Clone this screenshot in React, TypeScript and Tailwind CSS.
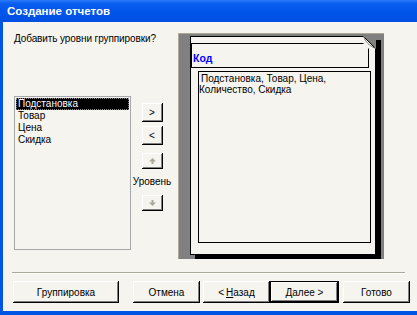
import React from "react";

const btn3d =
  "bg-[#F5F4EF] shadow-[inset_-1px_-1px_#000,inset_1px_1px_#fff,inset_-2px_-2px_#808080] flex items-center justify-center text-[10px] text-black";

function SmallBtn({ children, className = "" }: { children?: React.ReactNode; className?: string }) {
  return <div className={`${btn3d} w-[21px] ${className}`}>{children}</div>;
}

export default function App() {
  return (
    <div className="w-[417px] h-[315px] overflow-hidden bg-[#0054E3] flex flex-col font-['Liberation_Sans',Arial,sans-serif]">
      {/* Title bar */}
      <div className="h-[22px] shrink-0 bg-[linear-gradient(180deg,#2B7BF7_0%,#0A5FEE_15%,#0055EA_50%,#0050E2_100%)] pl-[7px] flex items-center">
        <span className="text-white font-bold text-[11.5px] leading-[22px]">Создание отчетов</span>
      </div>
      {/* Body with frame */}
      <div className="flex-1 flex pl-[3px] pb-[4px] bg-[#0055E5]">
        <div className="flex-1 bg-[#F5F4EF] flex flex-col">
          <div className="flex mt-[11px] ml-[11px]">
            {/* Left column */}
            <div className="w-[164px] flex flex-col">
              <div className="text-[10px] leading-[12px] text-black tracking-[-0.1px]">Добавить уровни группировки?</div>
              <div className="flex mt-[51px]">
                <div className="w-[117px] h-[154px] border border-[#A7A6AA] bg-[#F5F4EF] pt-[1px] px-[1px] text-[10px]">
                  <div className="h-[12px] leading-[12px] bg-black text-white pl-[2px] outline outline-1 outline-dotted outline-[#888] -outline-offset-1">
                    Подстановка
                  </div>
                  <div className="h-[12px] leading-[12px] pl-[2px] text-black">Товар</div>
                  <div className="h-[12px] leading-[12px] pl-[2px] text-black">Цена</div>
                  <div className="h-[12px] leading-[12px] pl-[2px] text-black">Скидка</div>
                </div>
                <div className="w-[42px] flex flex-col items-center">
                  <SmallBtn className="mt-[7px] h-[19px]">&gt;</SmallBtn>
                  <SmallBtn className="mt-[4px] h-[19px]">&lt;</SmallBtn>
                  <SmallBtn className="mt-[8px] h-[16px]">
                    <svg width="7" height="6" viewBox="0 0 7 6">
                      <polygon points="3.5,0 7,3.5 4.5,3.5 4.5,6 2.5,6 2.5,3.5 0,3.5" fill="#ACA899" />
                    </svg>
                  </SmallBtn>
                  <div className="mt-[7px] text-[10px] leading-[12px] text-black">Уровень</div>
                  <SmallBtn className="mt-[7px] h-[16px]">
                    <svg width="7" height="6" viewBox="0 0 7 6">
                      <polygon points="2.5,0 4.5,0 4.5,2.5 7,2.5 3.5,6 0,2.5 2.5,2.5" fill="#ACA899" />
                    </svg>
                  </SmallBtn>
                </div>
              </div>
            </div>
            {/* Preview */}
            <div className="w-[206px] h-[226px] bg-[#808080] border-t border-l border-[#ACA899] pt-[2px] pl-[11px]">
              <div className="relative w-[186px] h-[219px] border border-black bg-[#F5F4EF] shadow-[5px_4px_0_#000]">
                <div className="mt-[6px] w-[178px] h-[25px] border border-black pl-[1px] pt-[1px]">
                  <span className="text-[10.5px] leading-[12px] font-bold text-[#0000FF]">Код</span>
                </div>
                <div className="mt-[3px] ml-[7px] w-[173px] h-[172px] border border-black pl-[0px] pt-[1px] text-[10px] leading-[11px] text-black whitespace-nowrap">
                  <div className="pl-[2px]">Подстановка, Товар, Цена,</div>
                  <div>Количество, Скидка</div>
                </div>
                <svg className="absolute -top-px -right-px" width="13" height="13" viewBox="0 0 13 13">
                  <polygon points="0,0 13,0 13,13" fill="#808080" />
                  <polygon points="0.5,0.5 12.5,12.5 0.5,12.5" fill="#F5F4EF" />
                  <path d="M0.5 0.5 L12.5 12.5" stroke="#000" strokeWidth="1" fill="none" />
                  <path d="M0.5 0.5 C3 6 5 9 12.5 12.5" stroke="#808080" strokeWidth="1" fill="none" />
                </svg>
              </div>
            </div>
          </div>
          {/* Separator */}
          <div className="mt-[13px] ml-[9px] w-[393px] h-[2px] border-t border-[#ACA899] border-b border-b-white" />
          {/* Buttons */}
          <div className="flex mt-[7px] ml-[10px]">
            <div className={`${btn3d} w-[106px] h-[22px]`}>Группировка</div>
            <div className={`${btn3d} ml-[14px] w-[67px] h-[22px]`}>Отмена</div>
            <div className={`${btn3d} ml-[3px] w-[67px] h-[22px]`}>
              &lt; <span className="underline ml-[2px]">Н</span>азад
            </div>
            <div className="ml-[0px] w-[69px] h-[22px] border border-black">
              <div className={`${btn3d} w-full h-full`}>
                <span className="underline">Д</span>алее &gt;
              </div>
            </div>
            <div className={`${btn3d} ml-[4px] w-[67px] h-[22px]`}>Готово</div>
          </div>
        </div>
      </div>
    </div>
  );
}
